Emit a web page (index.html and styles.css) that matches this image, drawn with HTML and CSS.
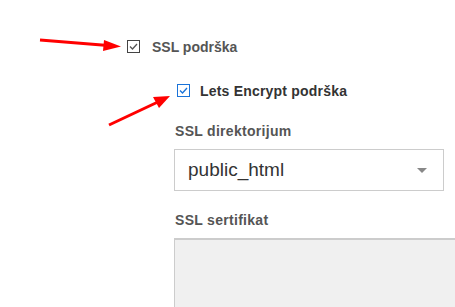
FILE: index.html
```html
<!DOCTYPE html>
<html lang="en">
<head>
  <meta charset="UTF-8">
  <title>SSL podrška</title>
  <link rel="stylesheet" href="styles.css">
</head>
<body>
  <div class="page">
    <label class="check-row">
      <span class="box">
        <svg width="11" height="11" viewBox="0 0 11 11"><path d="M2 5.5 L4.5 8 L9 3" fill="none" stroke="#555" stroke-width="1.3"/></svg>
      </span>
      <span class="check-text">SSL podrška</span>
    </label>

    <div class="nested">
      <label class="check-row indent">
        <span class="box box-blue">
          <svg width="11" height="11" viewBox="0 0 11 11"><path d="M2 5.5 L4.5 8 L9 3" fill="none" stroke="#1a73d9" stroke-width="1.3"/></svg>
        </span>
        <span class="check-text dark">Lets Encrypt podrška</span>
      </label>

      <div class="field">
        <div class="field-label">SSL direktorijum</div>
        <div class="select">
          <span>public_html</span>
          <span class="caret"></span>
        </div>
      </div>

      <div class="field">
        <div class="field-label">SSL sertifikat</div>
        <div class="textarea"></div>
      </div>
    </div>
  </div>

  <!-- red annotation arrows -->
  <svg class="arrows" width="455" height="307" viewBox="0 0 455 307">
    <line x1="40" y1="40" x2="108" y2="45.5" stroke="#f00" stroke-width="3"/>
    <polygon points="121,46.5 104,40 103,51" fill="#f00"/>
    <line x1="109" y1="125" x2="160" y2="101" stroke="#f00" stroke-width="3"/>
    <polygon points="170,96 153,97 159,108" fill="#f00"/>
  </svg>
</body>
</html>
```

FILE: styles.css
```css
* {
  box-sizing: border-box;
}

html, body {
  overflow: hidden;
}

body {
  margin: 0;
  font-family: "Liberation Sans", Arial, sans-serif;
  background: #fff;
  width: 455px;
  height: 307px;
}

.page {
  padding: 39px 0 0 127px;
}

.check-row {
  display: flex;
  align-items: center;
  gap: 12px;
  height: 15px;
}

.check-row.indent {
  margin-left: 3px;
  gap: 10px;
}

.box {
  width: 13px;
  height: 13px;
  border: 1px solid #444;
  display: flex;
  align-items: center;
  justify-content: center;
}

.box-blue {
  border-color: #1a73d9;
}

.check-text {
  font-size: 14px;
  font-weight: bold;
  color: #555;
}

.check-text.dark {
  color: #333;
  letter-spacing: 0.2px;
}

.nested {
  padding: 29px 0 0 47px;
}

.field {
  margin-top: 25px;
}

.field + .field {
  margin-top: 21px;
}

.field-label {
  font-size: 14px;
  font-weight: bold;
  color: #555;
  letter-spacing: 0.3px;
  margin-bottom: 10px;
  margin-left: 1px;
}

.select {
  width: 270px;
  height: 42px;
  border: 1px solid #ccc;
  display: flex;
  align-items: center;
  justify-content: space-between;
  padding: 0 16px 0 13px;
  font-size: 19px;
  color: #333;
}

.caret {
  width: 0;
  height: 0;
  border-left: 5px solid transparent;
  border-right: 5px solid transparent;
  border-top: 5px solid #888;
}

.textarea {
  width: 300px;
  height: 80px;
  background: #f0f0f0;
  border: 1px solid #ccc;
  border-top-width: 2px;
}

.arrows {
  position: absolute;
  left: 0;
  top: 0;
  pointer-events: none;
}
```
